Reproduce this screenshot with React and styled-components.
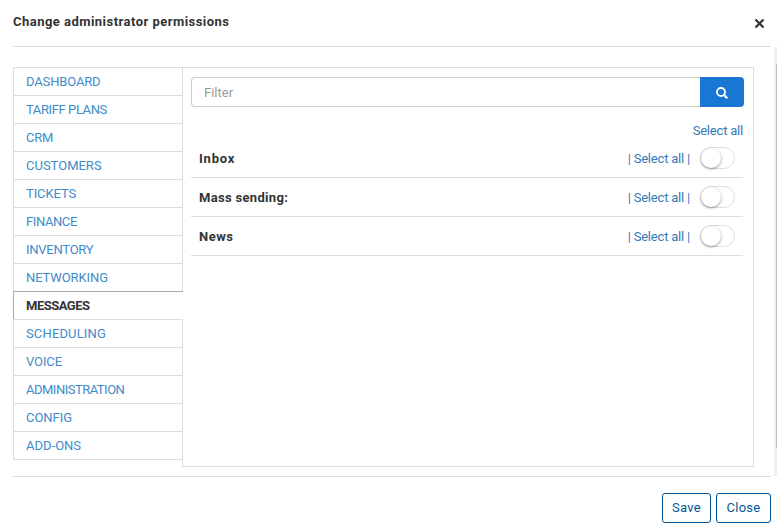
import React from 'react';
import styled, { createGlobalStyle } from 'styled-components';

const GlobalStyle = createGlobalStyle`
  * { box-sizing: border-box; }
  body { margin: 0; background: #fff; overflow: hidden; }
  button, input { font: inherit; letter-spacing: inherit; }
`;

const Dialog = styled.div`
  width: 777px;
  height: 529px;
  display: flex;
  flex-direction: column;
  background: #fff;
  color: #333;
  font: 13px/20px Roboto, 'Liberation Sans', sans-serif;
`;

const Header = styled.header`
  height: 47px;
  flex: none;
  display: flex;
  justify-content: space-between;
  align-items: flex-start;
  margin: 0 6px 0 13px;
  padding: 12px 6px 0 0;
  border-bottom: 1px solid #ddd;
`;

const Title = styled.h1`
  margin: 0;
  font-size: 13px;
  line-height: 20px;
  font-weight: 700;
  letter-spacing: 0.47px;
`;

const CloseIcon = styled.button`
  display: flex;
  width: 11px;
  height: 11px;
  margin-top: 6px;
  padding: 0;
  border: 0;
  background: none;
  color: #333;
`;

const Body = styled.div`
  height: 429px;
  flex: none;
  display: flex;
  justify-content: space-between;
  padding-left: 13px;
`;

const Tabs = styled.div`
  width: 741px;
  height: 400px;
  margin-top: 20px;
  display: flex;
`;

const Nav = styled.nav`
  width: 170px;
  height: 393px;
  display: flex;
  flex-direction: column;
  z-index: 1;
  margin-right: -1px;
  border-bottom: 1px solid #ddd;
`;

const NavItem = styled.a`
  height: 28px;
  width: 170px;
  padding: 0 0 0 12px;
  line-height: 27px;
  color: ${p => (p.$active ? '#333' : '#428bca')};
  font-weight: ${p => (p.$active ? 700 : 400)};
  letter-spacing: ${p => p.$spacing}px;
  border: 0 solid ${p => (p.$active ? '#aaa' : '#ddd')};
  border-width: 1px 0 0 1px;
  background: ${p => (p.$active ? '#fff' : 'transparent')};
`;

const Panel = styled.main`
  width: 572px;
  height: 400px;
  border: 1px solid #ddd;
  padding: 9px 9px 0 8px;
`;

const Search = styled.div`
  display: flex;
  height: 30px;
  width: 553px;
`;

const Input = styled.input`
  flex: 1;
  min-width: 0;
  padding: 2px 12px 0;
  border: 1px solid #ccc;
  border-right: 0;
  border-radius: 4px 0 0 4px;
  outline: 0;
  letter-spacing: 0;
  &::placeholder { color: #999; opacity: 1; }
`;

const SearchButton = styled.button`
  width: 44px;
  display: flex;
  align-items: center;
  justify-content: center;
  padding: 2px 0 0;
  color: #fff;
  background: #1976d2;
  border: 0;
  border-radius: 0 4px 4px 0;
`;

const Link = styled.a`
  color: #337ab7;
  letter-spacing: -0.2px;
  white-space: pre;
`;

const TopAction = styled.div`
  height: 32px;
  width: 552px;
  padding-top: 14px;
  text-align: right;
`;

const Row = styled.div`
  height: 39px;
  width: 552px;
  display: flex;
  align-items: flex-start;
  padding: 10px 8px 0;
  border-bottom: 1px solid #ddd;
`;

const RowLabel = styled.span`
  flex: 1;
  font-weight: 700;
  letter-spacing: ${p => p.$spacing}px;
`;

const Switch = styled.span`
  width: 35px;
  height: 22px;
  margin: -2px 0 0 10px;
  border: 1px solid #dfdfdf;
  border-radius: 11px;
  background: #fff;
`;

const Knob = styled.span`
  display: block;
  width: 20px;
  height: 20px;
  border-radius: 50%;
  background: #fff;
  box-shadow: 0 1px 3px rgba(0, 0, 0, 0.4);
`;

const Scrollbar = styled.div`
  width: 3px;
  padding: 17px 0 28px 2px;
  background: #f1f1f1;
`;

const Thumb = styled.div`
  height: 384px;
  background: #c1c1c1;
`;

const Footer = styled.footer`
  flex: 1;
  display: flex;
  justify-content: flex-end;
  gap: 5px;
  margin: 0 6px 0 13px;
  padding-top: 16px;
  border-top: 1px solid #ddd;
`;

const Button = styled.button`
  width: ${p => p.$width}px;
  height: 30px;
  padding: 0;
  color: #01579b;
  background: #fff;
  border: 1px solid #01579b;
  border-radius: 3px;
  letter-spacing: 0.25px;
`;

const TABS = [
  ['DASHBOARD', -0.15], ['TARIFF PLANS', -0.4], ['CRM', -0.2], ['CUSTOMERS', 0],
  ['TICKETS', -0.1], ['FINANCE', -0.4], ['INVENTORY', -0.25], ['NETWORKING', -0.1],
  ['MESSAGES', -0.5], ['SCHEDULING', 0.15], ['VOICE', -0.1], ['ADMINISTRATION', -0.5],
  ['CONFIG', -0.05], ['ADD-ONS', 0],
];

const ROWS = [['Inbox', 0.8], ['Mass sending:', 0.32], ['News', 0.5]];

export default function App() {
  return (
    <>
      <GlobalStyle />
      <Dialog>
        <Header>
          <Title>Change administrator permissions</Title>
          <CloseIcon aria-label="Close dialog">
            <svg width="11" height="11" viewBox="0 0 11 11" stroke="currentColor" strokeWidth="2.2">
              <path d="M1.5 1.5 9.5 9.5M9.5 1.5 1.5 9.5" />
            </svg>
          </CloseIcon>
        </Header>
        <Body>
          <Tabs>
            <Nav>
              {TABS.map(([name, spacing]) => (
                <NavItem key={name} $active={name === 'MESSAGES'} $spacing={spacing}>{name}</NavItem>
              ))}
            </Nav>
            <Panel>
              <Search>
                <Input placeholder="Filter" />
                <SearchButton aria-label="Search">
                  <svg width="12" height="12" viewBox="0 0 12 12" fill="none" stroke="currentColor">
                    <circle cx="5" cy="5" r="4" strokeWidth="1.8" />
                    <path d="m8 8 3.3 3.3" strokeWidth="2.2" />
                  </svg>
                </SearchButton>
              </Search>
              <TopAction><Link>Select all</Link></TopAction>
              {ROWS.map(([name, spacing]) => (
                <Row key={name}>
                  <RowLabel $spacing={spacing}>{name}</RowLabel>
                  <Link>| Select all |</Link>
                  <Switch><Knob /></Switch>
                </Row>
              ))}
            </Panel>
          </Tabs>
          <Scrollbar><Thumb /></Scrollbar>
        </Body>
        <Footer>
          <Button $width={49}>Save</Button>
          <Button $width={55}>Close</Button>
        </Footer>
      </Dialog>
    </>
  );
}
